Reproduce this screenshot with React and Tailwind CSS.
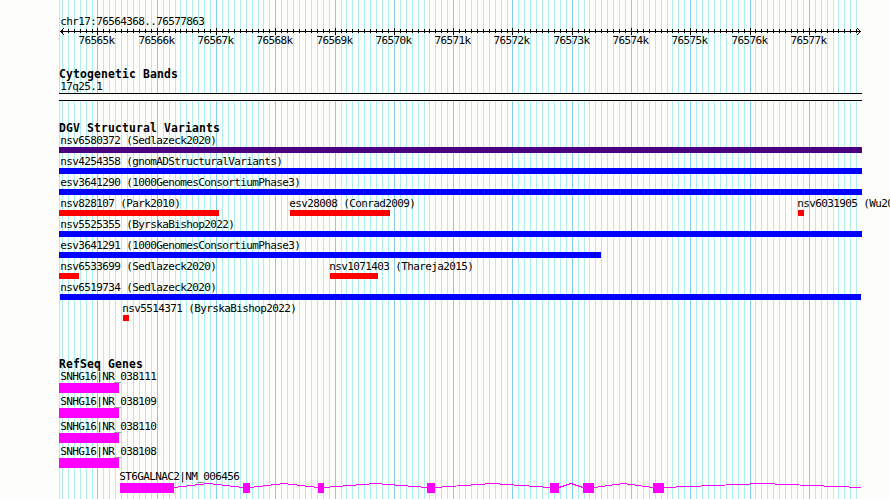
const REGION = { start: 76564368, end: 76577863 }
const LEFT = 60
const WIDTH = 800

const toX = (bp) => Math.round(LEFT + ((bp - REGION.start) / (REGION.end - REGION.start)) * WIDTH)

const ticks = []
for (let bp = 76564400; bp <= REGION.end; bp += 100) {
  ticks.push({ bp, x: toX(bp), major: bp % 1000 === 0 })
}
const majors = ticks.filter((t) => t.major)

// x / w are canvas pixels, each inner array is one bumped row
const variants = [
  [{ name: 'nsv6580372 (Sedlazeck2020)', x: 59, w: 803, color: 'bg-[#4b0082]' }],
  [{ name: 'nsv4254358 (gnomADStructuralVariants)', x: 59, w: 803, color: 'bg-[#0000ff]' }],
  [{ name: 'esv3641290 (1000GenomesConsortiumPhase3)', x: 59, w: 803, color: 'bg-[#0000ff]' }],
  [
    { name: 'nsv828107 (Park2010)', x: 59, w: 160, color: 'bg-[#ff0000]' },
    { name: 'esv28008 (Conrad2009)', x: 290, w: 100, color: 'bg-[#ff0000]', labelX: 289 },
    { name: 'nsv6031905 (Wu20', x: 798, w: 6, color: 'bg-[#ff0000]', labelX: 797 },
  ],
  [{ name: 'nsv5525355 (ByrskaBishop2022)', x: 59, w: 803, color: 'bg-[#0000ff]' }],
  [{ name: 'esv3641291 (1000GenomesConsortiumPhase3)', x: 59, w: 542, color: 'bg-[#0000ff]' }],
  [
    { name: 'nsv6533699 (Sedlazeck2020)', x: 59, w: 20, color: 'bg-[#ff0000]' },
    { name: 'nsv1071403 (Thareja2015)', x: 330, w: 48, color: 'bg-[#ff0000]', labelX: 329 },
  ],
  [{ name: 'nsv6519734 (Sedlazeck2020)', x: 60, w: 801, color: 'bg-[#0000ff]' }],
  [{ name: 'nsv5514371 (ByrskaBishop2022)', x: 123, w: 6, color: 'bg-[#ff0000]', labelX: 122 }],
]

const genes = ['SNHG16|NR_038111', 'SNHG16|NR_038109', 'SNHG16|NR_038110', 'SNHG16|NR_038108']

const exons = [
  [120, 174],
  [243, 250],
  [318, 324],
  [427, 435],
  [550, 559],
  [583, 594],
  [653, 664],
]

function GridLines() {
  return (
    <svg className="absolute inset-0" width="890" height="499" shapeRendering="crispEdges">
      <rect x="59" y="0" width="1" height="499" fill="#afeeee" />
      {ticks.map((t) => (
        <rect key={t.bp} x={t.x} y="0" width="1" height="499" fill={t.major ? '#87ceeb' : '#afeeee'} />
      ))}
    </svg>
  )
}

function Ruler() {
  return (
    <svg className="block" width="890" height="7" shapeRendering="crispEdges">
      <rect x="60" y="3" width="801" height="1" />
      {ticks.map((t) => (
        <rect key={t.bp} x={t.x} y={t.major ? 0 : 1} width="1" height={t.major ? 7 : 4} />
      ))}
      {[1, 2, 3].map((d) => (
        <g key={d}>
          <rect x={60 + d} y={3 - d} width="1" height="1" />
          <rect x={60 + d} y={3 + d} width="1" height="1" />
          <rect x={860 - d} y={3 - d} width="1" height="1" />
          <rect x={860 - d} y={3 + d} width="1" height="1" />
        </g>
      ))}
    </svg>
  )
}

function Title({ children }) {
  return <h2 className="h-3 pl-[59px] text-[11.4px] font-bold leading-3 tracking-[0.137px]">{children}</h2>
}

function VariantRow({ features }) {
  return (
    <div className="relative h-[21px]">
      {features.map((f) => (
        <div key={f.name}>
          <span className="absolute top-0 leading-[14px]" style={{ left: (f.labelX ?? 60) + 0.2 }}>{f.name}</span>
          <div className={`absolute top-[13px] h-1.5 ${f.color}`} style={{ left: f.x, width: f.w }} />
        </div>
      ))}
    </div>
  )
}

function SplicedGene() {
  return (
    <svg className="block" width="890" height="10" shapeRendering="crispEdges">
      {exons.map(([start, end], i) => {
        const next = exons[i + 1] ? exons[i + 1][0] : 861
        return (
          <g key={start}>
            <polyline
              points={`${end},4.5 ${(end + next) / 2},0.5 ${next},4.5`}
              fill="none"
              stroke="#ff00ff"
            />
            <rect x={start} y="0" width={end - start} height="10" fill="#ff00ff" />
          </g>
        )
      })}
    </svg>
  )
}

export default function App() {
  return (
    <div className="relative h-[499px] w-[890px] overflow-hidden whitespace-nowrap bg-[#fdfefb] font-['DejaVu_Sans_Mono',monospace] text-[11px] tracking-[-0.622px] text-black">
      <GridLines />
      <div className="relative pt-4">
        <header className="h-[52px]">
          <div className="h-3 pl-[60.2px] leading-3">chr17:76564368..76577863</div>
          <Ruler />
          <div className="relative h-3">
            {majors.map((t) => (
              <span key={t.bp} className="absolute top-0 w-9 leading-3" style={{ left: t.x - 18.6 }}>
                {t.bp / 1000}k
              </span>
            ))}
          </div>
        </header>

        <section className="h-[54px]">
          <Title>Cytogenetic Bands</Title>
          <div className="h-[13px] pl-[60.2px] leading-[14px]">17q25.1</div>
          <div className="ml-[59px] h-2 w-[803px] border-y border-black bg-[#fdfefb]" />
        </section>

        <section className="h-[236px]">
          <Title>DGV Structural Variants</Title>
          {variants.map((row) => (
            <VariantRow key={row[0].name} features={row} />
          ))}
        </section>

        <section>
          <Title>RefSeq Genes</Title>
          {genes.map((name) => (
            <div key={name} className="h-[25px]">
              <div className="h-[13px] pl-[60.2px] leading-[14px]">{name}</div>
              <div className="ml-[59px] h-2.5 w-[60px] bg-[#ff00ff]" />
            </div>
          ))}
          <div className="h-[13px] pl-[119.2px] leading-[14px]">ST6GALNAC2|NM_006456</div>
          <SplicedGene />
        </section>
      </div>
    </div>
  )
}
